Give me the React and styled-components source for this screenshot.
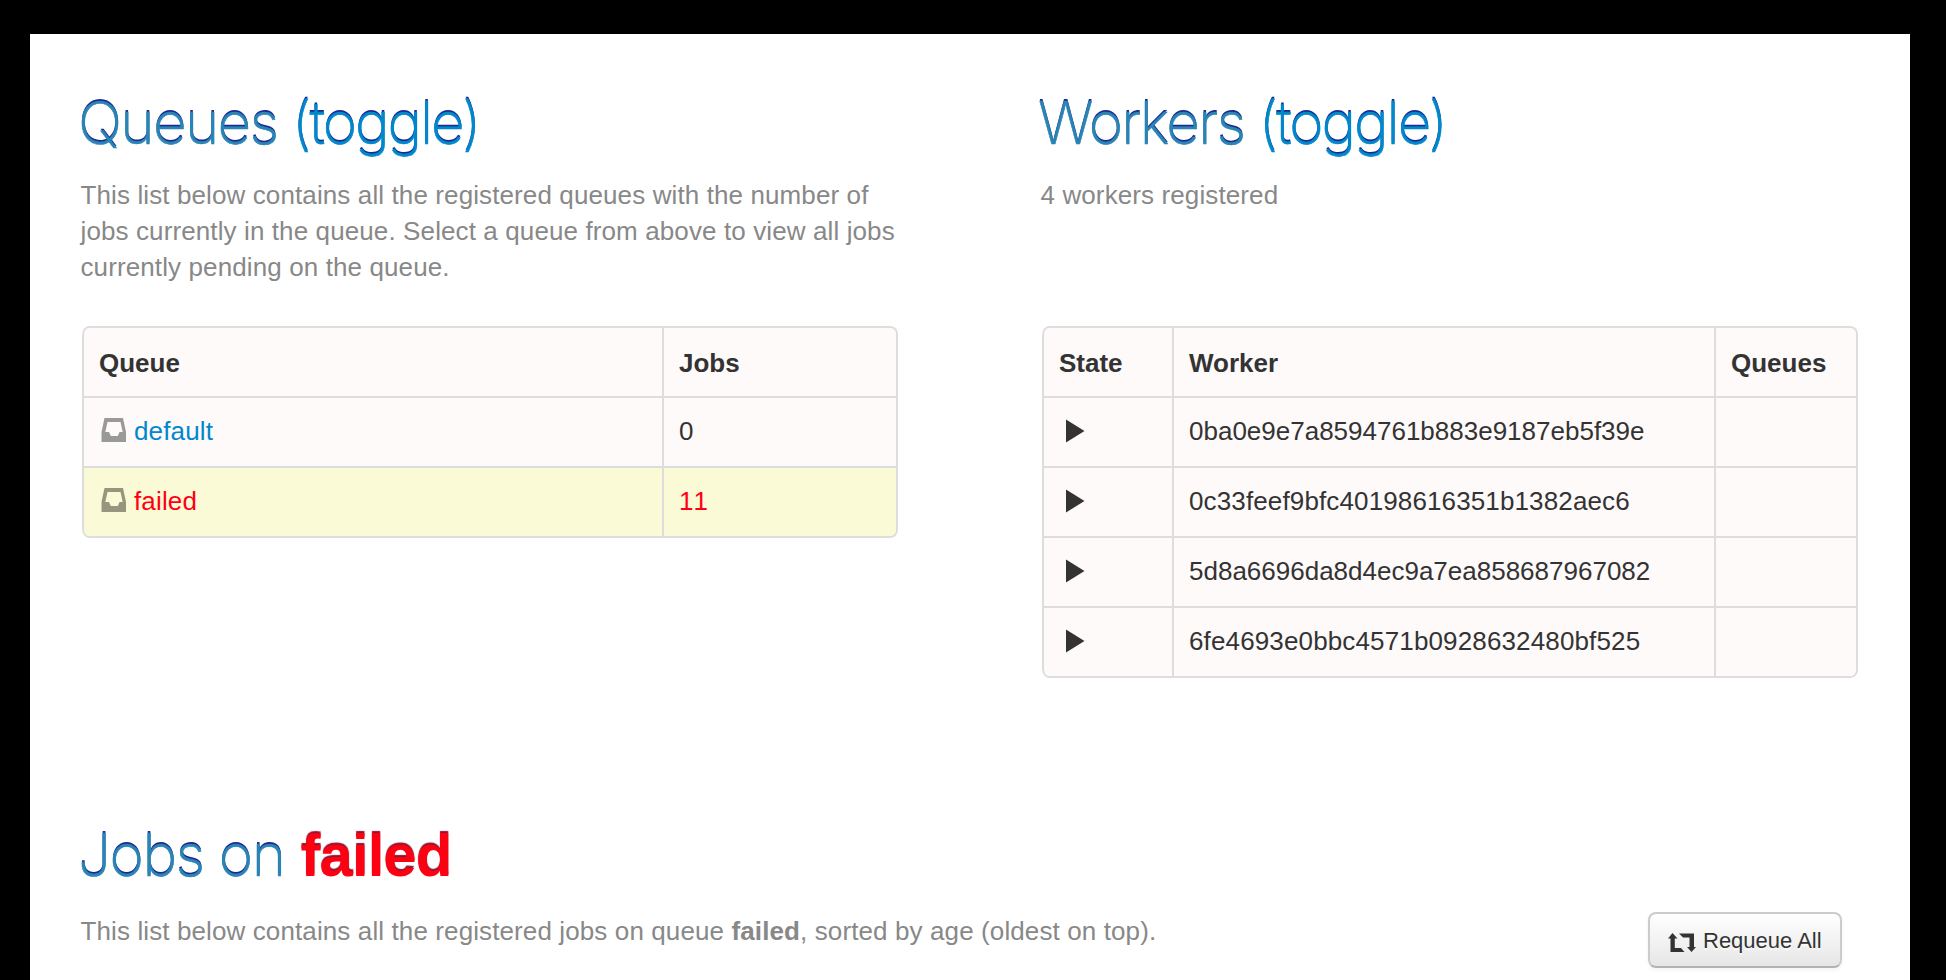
import React from 'react';
import styled, { createGlobalStyle } from 'styled-components';

const GlobalStyle = createGlobalStyle`
  * { box-sizing: border-box; }
  body {
    margin: 0;
    background: #000;
    color: #333;
    font: 26px/36px "Liberation Sans", Arial, sans-serif;
    overflow: hidden;
  }
`;

const Page = styled.main`
  height: 980px;
  margin: 0 36px 0 30px;
  padding: 53px 52px 0 50px;
  border-top: 34px solid #000;
  background: #fff;
  overflow: hidden;
`;

const Columns = styled.div`
  display: grid;
  grid-template-columns: 818px 818px;
  column-gap: 142px;
  height: 732px;
`;

const Heading = styled.h1`
  height: 72px;
  margin: 0 0 0 -2px;
  font: 200 58.5px/72px Inter, sans-serif;
  letter-spacing: ${(p) => p.$spacing || '-1.7px'};
  color: #2a85b5;
  -webkit-text-stroke: 0.6px currentColor;
  text-shadow: 0 -2px 0 #1b2a93;
  white-space: nowrap;
`;

const Toggle = styled.a`
  color: #08c;
  letter-spacing: -2.1px;
`;

const FailedName = styled.strong`
  margin-left: 1px;
  font: 700 60px/60px "Liberation Sans", Arial, sans-serif;
  letter-spacing: -1px;
  color: #ff0013;
  -webkit-text-stroke: 0;
  text-shadow: 0 -2px 1px #8c1530;
`;

const Intro = styled.p`
  margin: 0;
  padding: ${(p) => p.$top || '18px'} 0 0 0.500px;
  height: 167px;
  color: #888;
  white-space: nowrap;
  letter-spacing: 0.11px;
`;

const Table = styled.table`
  width: 816px;
  margin-left: 2px;
  table-layout: fixed;
  border: 2px solid #ddd;
  border-left: 0;
  border-spacing: 0;
  border-radius: 8px;
  overflow: hidden;
`;

const HeadCell = styled.th`
  width: ${(p) => p.$width};
  height: 68px;
  padding: 17px 0 15px 15px;
  border-left: 2px solid #ddd;
  background: #fefafa;
  text-align: left;
  &:first-child { border-top-left-radius: 7px; }
`;

const Cell = styled.td`
  height: 70px;
  padding: 15px 0 17px 15px;
  border-top: 2px solid #ddd;
  border-left: 2px solid #ddd;
  background: ${(p) => (p.$failed ? '#fafad6' : '#fefafa')};
  color: ${(p) => (p.$failed ? '#ff0013' : '#333')};
  letter-spacing: ${(p) => p.$spacing || '0'};
  font-kerning: none;
  white-space: nowrap;
  tr:last-child &:first-child { border-bottom-left-radius: 7px; }
`;

const QueueLink = styled.a`
  display: flex;
  align-items: center;
  gap: 7px;
  color: ${(p) => (p.$failed ? '#ff0013' : '#08c')};
  letter-spacing: 0.15px;
`;

const Icon = styled.svg`
  display: block;
  flex: none;
  width: 28px;
  height: 28px;
`;

const Footer = styled.div`
  display: flex;
  justify-content: space-between;
  padding-right: 16px;
`;

const RequeueButton = styled.button`
  display: flex;
  align-items: center;
  width: 194px;
  height: 56px;
  margin-top: 21px;
  padding: 0 0 0 18px;
  gap: 7px;
  border: 2px solid #ccc;
  border-bottom-color: #b3b3b3;
  border-radius: 8px;
  background: linear-gradient(#fff, #e6e6e6);
  box-shadow: 0 2px 4px rgba(0, 0, 0, 0.05);
  color: #333;
  font: 22px/36px "Liberation Sans", Arial, sans-serif;
  text-shadow: 0 2px 2px rgba(255, 255, 255, 0.75);
  white-space: nowrap;
`;

const ButtonLabel = styled.span`
  padding-top: 1px;
`;

const InboxIcon = ({ color }) => (
  <Icon viewBox="0 0 28 28" fill={color}>
    <path fillRule="evenodd" d="M5.500 1h18.500L27 15v10H2.500V15zM8.500 5 6.300 15H10l1.800 4h7l1.700-4h3.200L21.500 5z" />
  </Icon>
);

const PlayIcon = () => (
  <Icon viewBox="0 0 28 28" fill="#333">
    <path d="M7 2.500 25.500 14 7 25.500z" />
  </Icon>
);

const RetweetIcon = () => (
  <Icon viewBox="0 0 28 28" fill="#333">
    <path d="M4.500 7 9.500 12.500H6.800V22H13l3.500 4h-14V12.500H0zM11 7.500h15V21h2l-4.500 5L19 21h2.500v-9.500H15z" />
  </Icon>
);

const queues = [
  { name: 'default', jobs: 0, tint: '#999' },
  { name: 'failed', jobs: 11, tint: '#96967f', failed: true },
];

const workers = [
  { id: '0ba0e9e7a8594761b883e9187eb5f39e' },
  { id: '0c33feef9bfc40198616351b1382aec6', spacing: '0.13px' },
  { id: '5d8a6696da8d4ec9a7ea858687967082' },
  { id: '6fe4693e0bbc4571b0928632480bf525', spacing: '0.14px' },
];

export default function App() {
  return (
    <Page>
      <GlobalStyle />
      <Columns>
        <section>
          <Heading>Queues <Toggle>(toggle)</Toggle></Heading>
          <Intro>
            This list below contains all the registered queues with the number of<br />
            jobs currently in the queue. Select a queue from above to view all jobs<br />
            currently pending on the queue.
          </Intro>
          <Table>
            <thead>
              <tr>
                <HeadCell $width="580px">Queue</HeadCell>
                <HeadCell>Jobs</HeadCell>
              </tr>
            </thead>
            <tbody>
              {queues.map((q) => (
                <tr key={q.name}>
                  <Cell $failed={q.failed}>
                    <QueueLink $failed={q.failed}><InboxIcon color={q.tint} />{q.name}</QueueLink>
                  </Cell>
                  <Cell $failed={q.failed}>{q.jobs}</Cell>
                </tr>
              ))}
            </tbody>
          </Table>
        </section>
        <section>
          <Heading $spacing="-1.8px">Workers <Toggle>(toggle)</Toggle></Heading>
          <Intro>4 workers registered</Intro>
          <Table>
            <thead>
              <tr>
                <HeadCell $width="130px">State</HeadCell>
                <HeadCell $width="542px">Worker</HeadCell>
                <HeadCell>Queues</HeadCell>
              </tr>
            </thead>
            <tbody>
              {workers.map(({ id, spacing }) => (
                <tr key={id}>
                  <Cell><PlayIcon /></Cell>
                  <Cell $spacing={spacing}>{id}</Cell>
                  <Cell />
                </tr>
              ))}
            </tbody>
          </Table>
        </section>
      </Columns>
      <Heading $spacing="-1.4px">Jobs on <FailedName>failed</FailedName></Heading>
      <Footer>
        <Intro $top="22px">
          This list below contains all the registered jobs on queue <strong>failed</strong>, sorted by age (oldest on top).
        </Intro>
        <RequeueButton><RetweetIcon /><ButtonLabel>Requeue All</ButtonLabel></RequeueButton>
      </Footer>
    </Page>
  );
}
